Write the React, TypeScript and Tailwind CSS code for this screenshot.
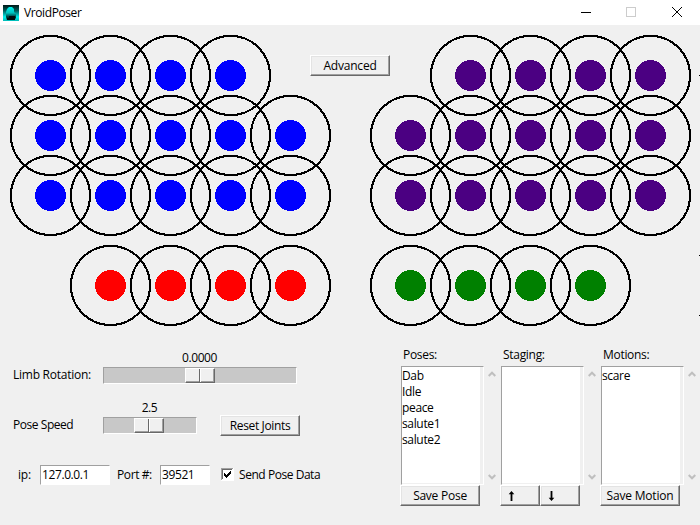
import React from "react";

const columns = (from: number, count: number) =>
  Array.from({ length: count }, (_, i) => from + i * 60);

const groups = [
  { fill: "#0000ff", y: 50, xs: columns(50, 4) },
  { fill: "#0000ff", y: 110, xs: columns(50, 5) },
  { fill: "#0000ff", y: 170, xs: columns(50, 5) },
  { fill: "#4b0082", y: 50, xs: columns(470, 4) },
  { fill: "#4b0082", y: 110, xs: columns(410, 5) },
  { fill: "#4b0082", y: 170, xs: columns(410, 5) },
  { fill: "#ff0000", y: 260, xs: columns(110, 4) },
  { fill: "#008000", y: 260, xs: columns(410, 4) },
];

function JointCanvas() {
  return (
    <svg width="700" height="320" className="block" shapeRendering="crispEdges">
      {groups.map((g, i) =>
        g.xs.map((x) => (
          <g key={`${i}-${x}`}>
            <circle cx={x + 0.5} cy={g.y + 0.5} r="39.6" fill="none" stroke="#000" strokeWidth="2.1" />
            <circle cx={x + 0.5} cy={g.y + 0.5} r="15.4" fill={g.fill} />
          </g>
        )),
      )}
      {[50, 230, 290].map((y) => (
        <rect key={y} x="699" y={y} width="1" height="1" />
      ))}
    </svg>
  );
}

function Button({ children, className = "" }: { children: React.ReactNode; className?: string }) {
  return (
    <button
      className={`flex h-[21px] items-center justify-center border border-t-white border-l-white border-r-[#696969] border-b-[#696969] bg-[#f0f0f0] whitespace-nowrap shadow-[inset_-1px_-1px_0_#a0a0a0,inset_1px_1px_0_#e3e3e3] ${className}`}
    >
      {children}
    </button>
  );
}

function Slider({ value, className, thumb }: { value: string; className: string; thumb: string }) {
  return (
    <div className={className}>
      <div className="h-[18px] pt-px pr-px text-center leading-4 tracking-[-0.4px]">{value}</div>
      <div className="h-[17px] border border-t-[#a0a0a0] border-l-[#a0a0a0] border-r-white border-b-white bg-[#c8c8c8]">
        <div
          className={`flex h-[15px] w-[30px] border border-t-white border-l-white border-r-[#696969] border-b-[#696969] bg-[#f0f0f0] shadow-[inset_-1px_-1px_0_#a0a0a0] ${thumb}`}
        >
          <div className="h-full w-[14px] border-r border-[#696969]" />
          <div className="h-full w-px bg-white" />
        </div>
      </div>
    </div>
  );
}

function Chevron({ down = false }: { down?: boolean }) {
  return (
    <svg width="8" height="6" viewBox="0 0 8 6" fill="none" stroke="#bfbfbf" strokeWidth="2">
      <path d={down ? "M0.7 1 L4 4.3 L7.3 1" : "M0.7 5 L4 1.7 L7.3 5"} />
    </svg>
  );
}

function Arrow({ down = false }: { down?: boolean }) {
  return (
    <svg width="7" height="10" viewBox="0 0 7 10" className={down ? "rotate-180" : ""}>
      <path d="M3.5 0L6.3 3.2H4.4V10H2.6V3.2H0.7z" />
    </svg>
  );
}

function ListPanel({ title, items, children }: {
  title: string;
  items: string[];
  children: React.ReactNode;
}) {
  return (
    <section className="w-[100px]">
      <h2 className="h-[21px] pt-0.5 pl-[3px] leading-4 tracking-[-0.3px]">{title}</h2>
      <div className="flex">
        <div className="ml-px h-[119px] w-[83px] border border-t-[#a0a0a0] border-l-[#a0a0a0] border-r-white border-b-white pr-[3px] pb-px">
          <ul className="h-full bg-white pt-px">
            {items.map((item) => (
              <li key={item} className="h-4 leading-4 tracking-[-0.35px]">{item}</li>
            ))}
          </ul>
        </div>
        <div className="flex h-[119px] flex-col justify-between pt-[5px] pb-[5px] pl-1">
          <Chevron />
          <Chevron down />
        </div>
      </div>
      <div className="flex w-20">{children}</div>
    </section>
  );
}

export default function App() {
  return (
    <main className="h-[525px] w-[700px] overflow-hidden bg-[#f0f0f0] font-['Open_Sans','Noto_Sans',sans-serif] text-[12px] text-black">
      <header className="flex h-[25px] items-center bg-white pl-[3px]">
        <svg width="16" height="16" viewBox="0 0 16 16">
          <defs>
            <linearGradient id="sky" x2="0" y2="1">
              <stop stopColor="#001716" />
              <stop offset="0.35" stopColor="#005a58" />
              <stop offset="0.75" stopColor="#00f0ec" />
              <stop offset="1" stopColor="#00b8b4" />
            </linearGradient>
            <linearGradient id="figure" x2="0" y2="1">
              <stop stopColor="#00f4ee" />
              <stop offset="0.45" stopColor="#00c4c0" />
              <stop offset="0.75" stopColor="#003b3a" />
              <stop offset="1" stopColor="#000808" />
            </linearGradient>
          </defs>
          <path fill="url(#sky)" d="M0 0h16v16H0z" />
          <path fill="url(#figure)" d="M6 2h3l2 2v3l2 2v4l-2 2H4l-1-3V7l1-3z" />
          <path fill="#000d0d" d="M6 11h6v4H4v-2h2z" />
        </svg>
        <h1 className="ml-[5px] grow tracking-[-0.4px]">VroidPoser</h1>
        <svg width="45" height="25" stroke="#000" shapeRendering="crispEdges">
          <path d="M16 12.5h10" />
        </svg>
        <svg width="45" height="25" fill="none" stroke="#ccc" shapeRendering="crispEdges">
          <path d="M16.5 7.5h9v9h-9z" />
        </svg>
        <svg width="45" height="25" fill="none" stroke="#000">
          <path d="M17 7l10 10M27 7L17 17" />
        </svg>
      </header>

      <div className="relative h-[320px]">
        <JointCanvas />
        <div className="absolute top-[30px] left-[310px]">
          <Button className="w-20 tracking-[-0.2px]">Advanced</Button>
        </div>
      </div>

      <div className="flex h-[180px]">
        <div className="w-[400px]">
          <div className="flex h-[50px] pt-[4px] pl-[13px]">
            <label className="w-[90px] pt-[18px] leading-4 tracking-[-0.25px]">Limb Rotation:</label>
            <Slider value="0.0000" className="w-[194px]" thumb="ml-[81px]" />
          </div>
          <div className="flex h-[50px] pt-[4px] pl-[13px]">
            <label className="w-[90px] pt-[18px] leading-4 tracking-[-0.45px]">Pose Speed</label>
            <Slider value="2.5" className="w-[94px]" thumb="ml-[30px]" />
            <Button className="mt-4 ml-[23px] w-20 tracking-[-0.35px]">Reset Joints</Button>
          </div>
          <div className="flex h-10 items-center pt-[19px] pl-[18px]">
            <label className="w-[22px] tracking-[-0.2px]">ip:</label>
            <div className="flex h-5 w-[70px] items-center border border-t-[#a0a0a0] border-l-[#a0a0a0] border-r-white border-b-white bg-white pl-px tracking-[-0.4px]">127.0.0.1</div>
            <label className="w-[50px] pl-[7px] whitespace-nowrap tracking-[-0.4px]">Port #:</label>
            <div className="flex h-5 w-[50px] items-center border border-t-[#a0a0a0] border-l-[#a0a0a0] border-r-white border-b-white bg-white pl-px tracking-[-0.4px]">39521</div>
            <svg className="ml-[11px]" width="13" height="13" shapeRendering="crispEdges">
              <path fill="#fff" d="M0 0h13v13H0z" />
              <path fill="#a0a0a0" d="M0 0h12v1H1v11H0z" />
              <path fill="#696969" d="M1 1h10v1H2v9H1z" />
              <path fill="#000" d="M3 5h1v1h1v1h1v-1h1v-1h1v-1h1v-1h1v3h-1v1h-1v1h-1v1h-1v1h-1v-1h-1v-1h-1z" />
            </svg>
            <span className="ml-[5px] pt-px whitespace-nowrap tracking-[-0.45px]">Send Pose Data</span>
          </div>
        </div>

        <ListPanel title="Poses:" items={["Dab", "Idle", "peace", "salute1", "salute2"]}>
          <Button className="w-20 tracking-[-0.25px]">Save Pose</Button>
        </ListPanel>
        <ListPanel title="Staging:" items={[]}>
          <Button className="w-10 pr-[17px]"><Arrow /></Button>
          <Button className="w-10 pr-[17px]"><Arrow down /></Button>
        </ListPanel>
        <ListPanel title="Motions:" items={["scare"]}>
          <Button className="w-20 tracking-[-0.2px]">Save Motion</Button>
        </ListPanel>
      </div>
    </main>
  );
}
